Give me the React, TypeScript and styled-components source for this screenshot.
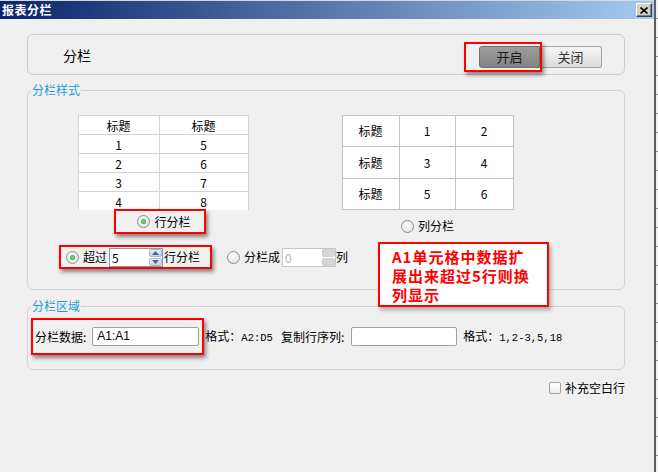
import React from "react";
import styled, { createGlobalStyle } from "styled-components";

const GlobalStyle = createGlobalStyle`
  html, body {
    margin: 0;
    padding: 0;
  }
  body {
    width: 658px;
    height: 472px;
    overflow: hidden;
    background: #f0f0f0;
    font-family: "Noto Sans CJK SC", "Liberation Sans", sans-serif;
    font-size: 12px;
    color: #000;
  }
`;

function App() {
  return (
    <Screen>
      <GlobalStyle />
      <Window>
        <TitleBar>
          <TitleText>报表分栏</TitleText>
          <CloseButton>
            <svg width="8" height="7" viewBox="0 0 8 7">
              <path d="M0.5 0.5 L7.5 6.5 M7.5 0.5 L0.5 6.5" stroke="#000" strokeWidth="1.6" />
            </svg>
          </CloseButton>
        </TitleBar>

        <Body>
          <TopPanel>
            <PanelTitle>分栏</PanelTitle>
            <SegGroup>
              <SegButton $active>开启</SegButton>
              <SegButton>关闭</SegButton>
              <SegMark />
            </SegGroup>
          </TopPanel>

          <GroupBox $gap={8}>
            <Legend>分栏样式</Legend>
            <StyleRow>
              <LeftCol>
                <TableClip>
                  <RowTable>
                    <colgroup>
                      <col style={{ width: 81 }} />
                      <col style={{ width: 89 }} />
                    </colgroup>
                    <tbody>
                      <SmallRow>
                        <Cell>标题</Cell>
                        <Cell>标题</Cell>
                      </SmallRow>
                      {[
                        ["1", "5"],
                        ["2", "6"],
                        ["3", "7"],
                        ["4", "8"],
                      ].map(([a, b]) => (
                        <SmallRow key={a}>
                          <Cell>{a}</Cell>
                          <Cell>{b}</Cell>
                        </SmallRow>
                      ))}
                    </tbody>
                  </RowTable>
                </TableClip>
                <OptionFrame>
                  <RadioLabel>
                    <Radio $checked />
                    行分栏
                  </RadioLabel>
                </OptionFrame>
              </LeftCol>

              <RightCol>
                <ColTable>
                  <colgroup>
                    <col style={{ width: 57 }} />
                    <col style={{ width: 56 }} />
                    <col style={{ width: 58 }} />
                  </colgroup>
                  <tbody>
                    {[
                      ["1", "2", 31],
                      ["3", "4", 32],
                      ["5", "6", 31],
                    ].map(([a, b, h]) => (
                      <BigRow key={a} $h={h as number}>
                        <BigCell>标题</BigCell>
                        <BigCell>{a}</BigCell>
                        <BigCell>{b}</BigCell>
                      </BigRow>
                    ))}
                  </tbody>
                </ColTable>
                <RadioLabel $top={9}>
                  <Radio />
                  列分栏
                </RadioLabel>
              </RightCol>
            </StyleRow>

            <SpinRow>
              <SpinFrame>
                <Radio $checked />
                <Gap $w={4} />
                超过
                <Gap $w={2} />
                <Spinner value="5" />
                <Gap $w={1} />
                行分栏
              </SpinFrame>
              <Gap $w={15} />
              <Radio />
              <Gap $w={4} />
              分栏成
              <Gap $w={2} />
              <Spinner value="0" disabled />
              列
              <Note>
                <div>A1单元格中数据扩</div>
                <div>展出来超过5行则换</div>
                <div>列显示</div>
              </Note>
            </SpinRow>
          </GroupBox>

          <GroupBox $gap={9}>
            <Legend>分栏区域</Legend>
            <SourceRow>
              <DataFrame>
                分栏数据:
                <TextInput $w={107}>A1:A1</TextInput>
              </DataFrame>
              <Hint $ml={1}>
                格式：<Mono>A2:D5</Mono>
              </Hint>
              <Hint $ml={8}>复制行序列:</Hint>
              <TextInput $w={106} $ml={7} />
              <Hint $ml={6}>
                格式：<Mono>1,2-3,5,18</Mono>
              </Hint>
            </SourceRow>
          </GroupBox>

          <CheckRow>
            <CheckBox />
            补充空白行
          </CheckRow>
        </Body>
      </Window>
      <EdgeStrip />
    </Screen>
  );
}

function Spinner({ value, disabled }: { value: string; disabled?: boolean }) {
  return (
    <SpinBox $disabled={disabled}>
      <SpinValue $disabled={disabled}>{value}</SpinValue>
      <SpinButtons>
        <SpinKey $disabled={disabled}>
          {!disabled && (
            <svg width="7" height="4" viewBox="0 0 7 4">
              <path d="M0 4 L3.5 0 L7 4 Z" fill="#4d6185" />
            </svg>
          )}
        </SpinKey>
        <SpinKey $disabled={disabled}>
          {!disabled && (
            <svg width="7" height="4" viewBox="0 0 7 4">
              <path d="M0 0 L3.5 4 L7 0 Z" fill="#4d6185" />
            </svg>
          )}
        </SpinKey>
      </SpinButtons>
    </SpinBox>
  );
}

export default App;

const Screen = styled.div`
  display: flex;
  width: 658px;
  height: 472px;
`;

const Window = styled.div`
  width: 654px;
  display: flex;
  flex-direction: column;
  border-top: 1px solid #d8d8d8;
`;

const EdgeStrip = styled.div`
  width: 2px;
  border-left: 2px solid #5e5e5e;
  background: repeating-linear-gradient(to bottom, #f0f0f0 0 18px, #8a8a8a 18px 19px);
`;

const TitleBar = styled.div`
  height: 18px;
  display: flex;
  align-items: center;
  justify-content: space-between;
  padding: 0 2px;
  background: linear-gradient(to right, #0a246a, #a6caf0);
`;

const TitleText = styled.span`
  color: #fff;
  font-weight: 700;
  font-size: 12px;
  letter-spacing: 0.5px;
  line-height: 18px;
`;

const CloseButton = styled.div`
  width: 16px;
  height: 14px;
  box-sizing: border-box;
  display: flex;
  align-items: center;
  justify-content: center;
  background: #d4d0c8;
  border: 1px solid;
  border-color: #fff #404040 #404040 #fff;
  box-shadow: inset -1px -1px #808080;
`;

const Body = styled.div`
  display: flex;
  flex-direction: column;
  padding: 15px 29px 0 27px;
`;

const TopPanel = styled.div`
  height: 41px;
  box-sizing: border-box;
  display: flex;
  align-items: center;
  justify-content: space-between;
  padding: 4px 22px 0 35px;
  border: 1px solid #cdcdcd;
  border-radius: 6px;
`;

const PanelTitle = styled.span`
  font-size: 14px;
  line-height: 16px;
  margin-top: -3px;
`;

const SegGroup = styled.div`
  position: relative;
  display: flex;
`;

const SegButton = styled.div<{ $active?: boolean }>`
  width: ${(p) => (p.$active ? 61 : 62)}px;
  height: 22px;
  box-sizing: border-box;
  display: flex;
  align-items: center;
  justify-content: center;
  font-size: 13px;
  color: ${(p) => (p.$active ? "#1a1a1a" : "#333")};
  border: 1px solid ${(p) => (p.$active ? "#6e6e6e" : "#a2a2a2")};
  border-radius: ${(p) => (p.$active ? "3px 0 0 3px" : "0 3px 3px 0")};
  border-left-width: ${(p) => (p.$active ? 1 : 0)}px;
  background: ${(p) =>
    p.$active
      ? "linear-gradient(#9c9c9c, #848484)"
      : "linear-gradient(#f7f7f7, #dadada)"};
`;

const SegMark = styled.div`
  position: absolute;
  left: -15px;
  top: -4px;
  width: 78px;
  height: 30px;
  box-sizing: border-box;
  border: 2px solid #f00;
  box-shadow: 2px 3px 4px rgba(0, 0, 0, 0.45);
`;

const GroupBox = styled.fieldset<{ $gap: number }>`
  margin: ${(p) => p.$gap}px 0 0;
  padding: 0;
  min-width: 0;
  border: 1px solid #d3d3d3;
  border-radius: 6px;
`;

const Legend = styled.legend`
  margin-left: 3px;
  padding: 0 1px;
  font-size: 12px;
  line-height: 14px;
  color: #1e9bd7;
`;

const StyleRow = styled.div`
  display: flex;
  align-items: flex-start;
  gap: 94px;
  padding: 18px 0 0 50px;
`;

const LeftCol = styled.div`
  width: 170px;
  display: flex;
  flex-direction: column;
  align-items: center;
`;

const RightCol = styled.div`
  width: 171px;
  display: flex;
  flex-direction: column;
  align-items: center;
`;

const TableClip = styled.div`
  height: 95px;
  overflow: hidden;
`;

const RowTable = styled.table`
  width: 170px;
  table-layout: fixed;
  border-collapse: collapse;
  background: #fff;
`;

const SmallRow = styled.tr`
  height: 19px;
`;

const Cell = styled.td`
  padding: 0;
  border: 1px solid #d4d4d4;
  text-align: center;
  font-size: 12px;
  line-height: 17px;
`;

const ColTable = styled.table`
  width: 171px;
  table-layout: fixed;
  border-collapse: collapse;
  background: #fff;
`;

const BigRow = styled.tr<{ $h: number }>`
  height: ${(p) => p.$h}px;
`;

const BigCell = styled.td`
  padding: 0;
  border: 1px solid #c4c4c4;
  text-align: center;
  font-size: 12px;
  line-height: 16px;
`;

const RedFrame = styled.div`
  box-sizing: border-box;
  display: flex;
  align-items: center;
  border: 2px solid #f00;
  box-shadow: 2px 3px 4px rgba(0, 0, 0, 0.45);
`;

const OptionFrame = styled(RedFrame)`
  width: 92px;
  height: 25px;
  margin: -1px 0 0 -6px;
  justify-content: center;
  padding-left: 8px;
`;

const RadioLabel = styled.div<{ $top?: number }>`
  display: flex;
  align-items: center;
  gap: 4px;
  margin-top: ${(p) => p.$top ?? 0}px;
  font-size: 12px;
  line-height: 14px;
`;

const Radio = styled.span<{ $checked?: boolean }>`
  position: relative;
  flex: none;
  width: 13px;
  height: 13px;
  box-sizing: border-box;
  border: 1px solid #8e8f8f;
  border-radius: 50%;
  background: radial-gradient(circle at 40% 35%, #ffffff, #dcdcdc);

  &::after {
    content: "";
    display: ${(p) => (p.$checked ? "block" : "none")};
    position: absolute;
    left: 3px;
    top: 3px;
    width: 5px;
    height: 5px;
    border-radius: 50%;
    background: radial-gradient(circle, #7fe07f, #1f9a1f);
  }
`;

const SpinRow = styled.div`
  position: relative;
  display: flex;
  align-items: center;
  margin-top: 11px;
  padding: 0 0 20px 31px;
  font-size: 12px;
  line-height: 14px;
`;

const SpinFrame = styled(RedFrame)`
  height: 24px;
  padding: 0 10px 0 5px;
`;

const Gap = styled.span<{ $w: number }>`
  flex: none;
  width: ${(p) => p.$w}px;
`;

const SpinBox = styled.div<{ $disabled?: boolean }>`
  width: 54px;
  height: 19px;
  box-sizing: border-box;
  display: flex;
  border: 1px solid ${(p) => (p.$disabled ? "#c9c7ba" : "#7f9db9")};
  background: #fff;
`;

const SpinValue = styled.span<{ $disabled?: boolean }>`
  flex: 1;
  padding-left: 2px;
  font-size: 12px;
  line-height: 17px;
  color: ${(p) => (p.$disabled ? "#b0b0c8" : "#000")};
`;

const SpinButtons = styled.div`
  width: 13px;
  display: flex;
  flex-direction: column;
  gap: 1px;
`;

const SpinKey = styled.div<{ $disabled?: boolean }>`
  flex: 1;
  display: flex;
  align-items: center;
  justify-content: center;
  border-radius: 2px;
  border: 1px solid ${(p) => (p.$disabled ? "#cfcfcf" : "#a9b8d1")};
  background: ${(p) =>
    p.$disabled ? "#d6d6d6" : "linear-gradient(#e8eef8, #c5d1e6)"};
`;

const Note = styled.div`
  position: absolute;
  left: 350px;
  top: -3px;
  width: 171px;
  height: 65px;
  box-sizing: border-box;
  padding: 3px 0 0 12px;
  border: 2px solid #f00;
  background: #fff;
  box-shadow: 2px 3px 4px rgba(0, 0, 0, 0.3);
  color: #f00;
  font-size: 15px;
  font-weight: 700;
  line-height: 19px;
  letter-spacing: 1px;
  white-space: nowrap;
`;

const SourceRow = styled.div`
  display: flex;
  align-items: center;
  padding: 5px 0 14px 3px;
  font-size: 12px;
  line-height: 14px;
`;

const DataFrame = styled(RedFrame)`
  height: 37px;
  padding: 0 3px 0 2px;
  gap: 6px;
`;

const TextInput = styled.div<{ $w: number; $ml?: number }>`
  width: ${(p) => p.$w}px;
  height: 19px;
  box-sizing: border-box;
  margin-left: ${(p) => p.$ml ?? 0}px;
  padding-left: 4px;
  border: 1px solid #a0a0a0;
  border-radius: 2px;
  background: #fff;
  font-family: "Liberation Sans", sans-serif;
  font-size: 12px;
  line-height: 17px;
`;

const Hint = styled.span<{ $ml: number }>`
  margin-left: ${(p) => p.$ml}px;
  white-space: nowrap;
`;

const Mono = styled.span`
  font-family: "Liberation Mono", monospace;
  font-size: 10.5px;
`;

const CheckRow = styled.div`
  display: flex;
  align-items: center;
  justify-content: flex-end;
  gap: 4px;
  margin-top: 11px;
  font-size: 12px;
  line-height: 14px;
`;

const CheckBox = styled.span`
  width: 12px;
  height: 12px;
  box-sizing: border-box;
  border: 1px solid #a0a0a0;
  border-radius: 2px;
  background: linear-gradient(#ffffff, #ececec);
`;
